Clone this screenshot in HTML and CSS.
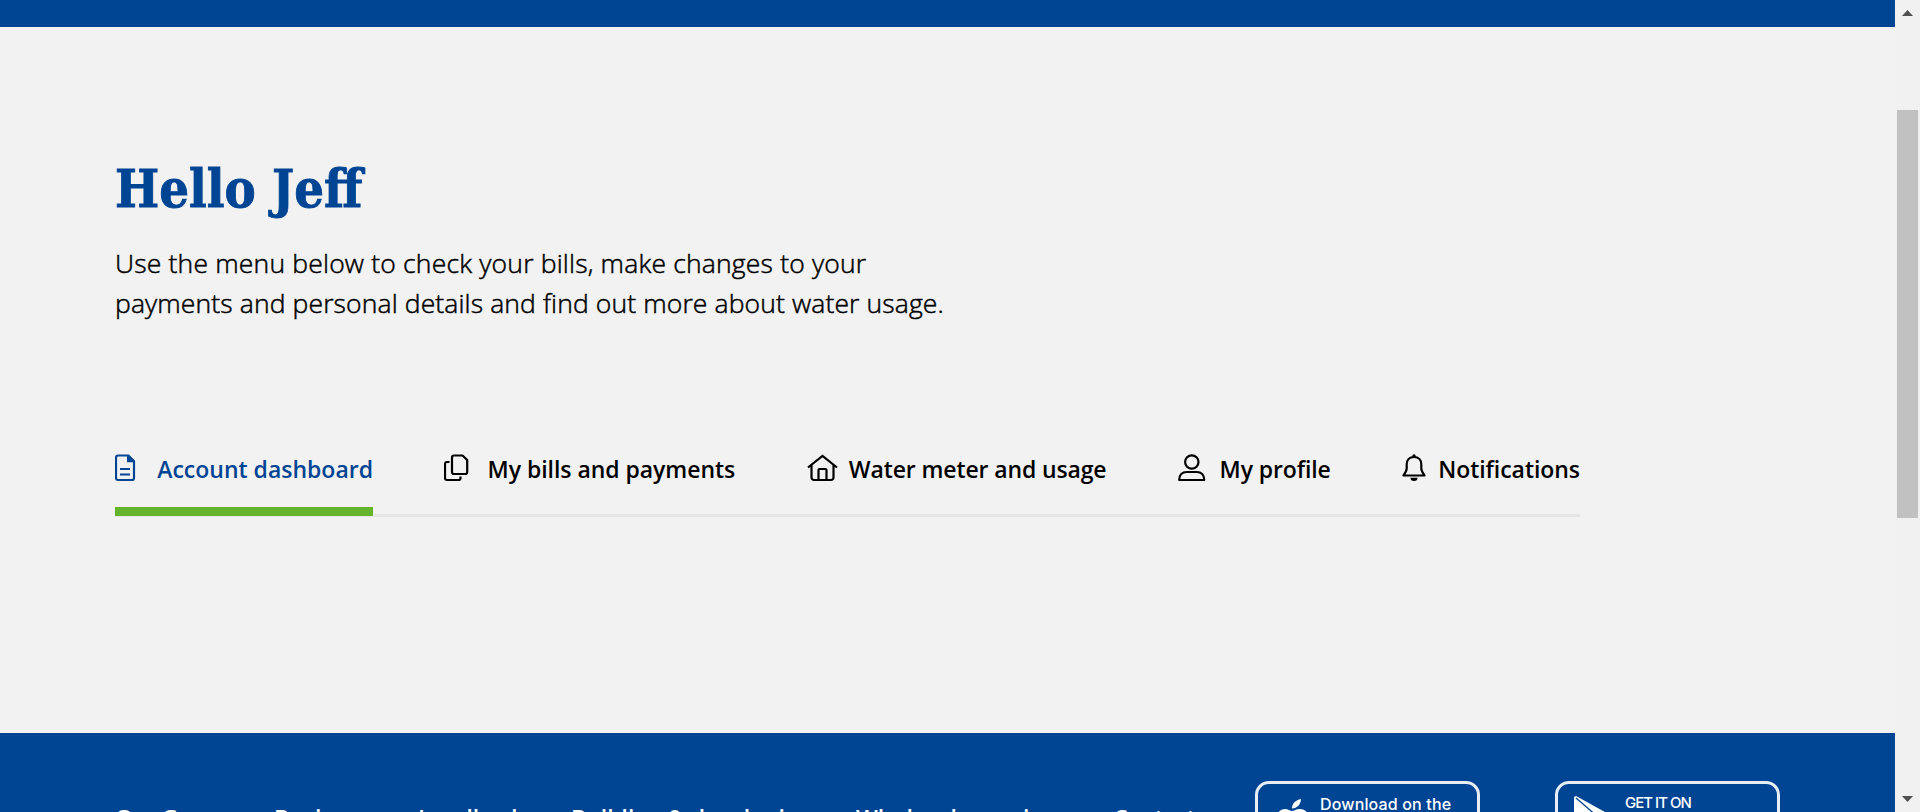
FILE: index.html
```html
<!DOCTYPE html>
<html lang="en">
<head>
<meta charset="utf-8">
<title>Account dashboard</title>
<link rel="stylesheet" href="styles.css">
</head>
<body>
<div class="page">
  <div class="topbar"></div>
  <main class="main">
    <h1 class="title">Hello Jeff</h1>
    <p class="intro"><span class="line-one">Use the menu below to check your bills, make changes to your</span><br><span class="line-two">payments and personal details and find out more about water usage.</span></p>
    <nav class="tabs">
      <a class="tab tab-active tab-dashboard"><svg class="icon" width="22" height="28" viewBox="0 0 22 28"><path d="M3 1.500h10.500L19 7.300v16.700a2 2 0 0 1-2 2H3a2 2 0 0 1-2-2V3.500a2 2 0 0 1 2-2z" fill="none" stroke="currentColor" stroke-width="2.200"/><path d="M12 1.500v6.700h7.500z" fill="currentColor"/><path d="M5 15h10M5 20.500h10" stroke="currentColor" stroke-width="2.200"/></svg><span class="tab-text">Account dashboard</span></a>
      <a class="tab tab-bills"><svg class="icon" width="26" height="28" viewBox="0 0 26 28"><path d="M10 1.500h8.500L23.200 6v12a2 2 0 0 1-2 2H10a2 2 0 0 1-2-2V3.500a2 2 0 0 1 2-2zM5.500 8H3a2 2 0 0 0-2 2v14a2 2 0 0 0 2 2h11.500a2 2 0 0 0 2-2v-1.500" fill="none" stroke="currentColor" stroke-width="2.200"/></svg><span class="tab-text">My bills and payments</span></a>
      <a class="tab tab-usage"><svg class="icon" width="32" height="28" viewBox="0 0 32 28"><path d="M1 13.500 15.500 1.800 30 13.500M4.500 11v12.500a2.500 2.500 0 0 0 2.500 2.500h17a2.500 2.500 0 0 0 2.500-2.500V11M11.500 26V16a1 1 0 0 1 1-1h6a1 1 0 0 1 1 1v10" fill="none" stroke="currentColor" stroke-width="2.200"/></svg><span class="tab-text">Water meter and usage</span></a>
      <a class="tab tab-profile"><svg class="icon" width="28" height="28" viewBox="0 0 28 28"><circle cx="13.800" cy="8" r="6.700" fill="none" stroke="currentColor" stroke-width="2.200"/><path d="M1.200 26c0-5 3-8 7.500-8h10c4.500 0 7.500 3 7.500 8z" fill="none" stroke="currentColor" stroke-width="2.200" stroke-linejoin="round"/></svg><span class="tab-text">My profile</span></a>
      <a class="tab tab-alerts"><svg class="icon" width="24" height="28" viewBox="0 0 24 28"><path d="M12 3C7.500 3 4.700 6 4.700 10.500v4c0 2.500-1.500 4.500-3.200 7h21c-1.700-2.500-3.200-4.500-3.200-7v-4C19.300 6 16.500 3 12 3z" fill="none" stroke="currentColor" stroke-width="2.200" stroke-linejoin="round"/><circle cx="12" cy="2" r="1.700" fill="currentColor"/><path d="M8.500 23.700h7a3.500 3.300 0 0 1-7 0z" fill="currentColor"/></svg><span class="tab-text">Notifications</span></a>
    </nav>
  </main>
  <footer class="footer">
    <div class="links">
      <a class="link-narrow">Our Group</a><a>Business</a><a>Landlords</a><a>Building &amp; developing</a><a>Wholesale services</a><a class="link-narrow">Contact</a>
    </div>
    <div class="badge">
      <svg class="badge-icon" width="36" height="44" viewBox="0 0 36 44"><path d="M18 12.500c0-5 3.500-8.500 9-9.500 0 5-4 9.500-9 9.500zM18 15c2 0 4-2 8-2 3 0 6 1.500 7.500 4-7 4-6 14 1 17-2 5-5 9-8 9-3 0-4-2-8-2s-5 2-8 2C5 43 1 34 1 26c0-8 5-13 10-13 3 0 5 2 7 2z" fill="#fff"/></svg>
      <span class="badge-text">Download on the</span>
    </div>
    <div class="badge badge-play">
      <svg class="badge-icon" width="40" height="44" viewBox="0 0 40 44"><path d="M0 1 2 0 40 21 0 43z" fill="#fff"/><path d="M2 2 24 21" stroke="#004494" stroke-width="1.300"/></svg>
      <span class="badge-text badge-text-play">GET IT ON</span>
    </div>
  </footer>
</div>
<div class="scrollbar">
  <svg class="arrow" width="11" height="6" viewBox="0 0 11 6"><path d="M0 6 5.500 0 11 6z" fill="#505050"/></svg>
  <div class="thumb"></div>
  <svg class="arrow arrow-down" width="11" height="6" viewBox="0 0 11 6"><path d="M0 0h11L5.500 6z" fill="#505050"/></svg>
</div>
</body>
</html>
```
FILE: styles.css
```css
* { box-sizing: border-box; }
body {
  margin: 0;
  display: flex;
  height: 812px;
  overflow: hidden;
  background: #f2f2f2;
  color: #000;
  font-family: "Open Sans", sans-serif;
}
.page { width: 1895px; height: 812px; overflow: hidden; display: flex; flex-direction: column; }
.topbar { height: 27px; flex: none; background: #004494; }
.main { height: 706px; flex: none; padding: 127px 0 0 115px; }
.title {
  margin: 0;
  height: 70px;
  color: #004494;
  font: bold 52px/70px "DejaVu Serif", serif;
  font-stretch: condensed;
  letter-spacing: 0;
  white-space: nowrap;
  -webkit-text-stroke: .8px #004494;
}
.intro { margin: 19px 0 0; height: 81px; font-size: 26.500px; font-weight: 300; line-height: 40px; white-space: nowrap; -webkit-text-stroke: .5px #000; }
.line-one { letter-spacing: .18px; }
.line-two { letter-spacing: .12px; }
.tabs {
  width: 1465px;
  height: 67px;
  margin-top: 126px;
  display: flex;
  justify-content: space-between;
  border-bottom: 3px solid #e6e6e6;
}
.tab { display: flex; justify-content: space-between; height: 66px; white-space: nowrap; font-size: 23px; font-weight: 600; line-height: 38px; }
.tab-active { color: #004494; border-bottom: 9px solid #66b32e; }
.tab-dashboard { width: 258px; }
.tab-bills { width: 291px; letter-spacing: -.04px; }
.tab-usage { width: 300px; letter-spacing: -.12px; }
.tab-profile { width: 153px; letter-spacing: -.1px; }
.tab-alerts { width: 178px; letter-spacing: -.05px; }
.icon { flex: none; margin-top: 4px; }
.footer { height: 79px; flex: none; display: flex; padding-left: 115px; background: #004494; color: #fff; }
.links {
  display: grid;
  grid-template-columns: 159px 144px 153px 285px 257px 1fr;
  width: 1140px;
  padding-top: 70px;
  font-size: 23px;
  font-weight: 600;
  line-height: 30px;
  white-space: nowrap;
}
.link-narrow { letter-spacing: -.6px; }
.badge { display: flex; width: 225px; height: 76px; margin-top: 48px; border: 3px solid #e8eef6; border-radius: 14px; }
.badge-play { margin-left: 75px; }
.badge-icon { flex: none; margin: 12px 0 0 16px; }
.badge-text { font: 500 16px/20px Inter, sans-serif; letter-spacing: .15px; margin: 10px 0 0 10px; white-space: nowrap; height: 20px; }
.badge-text-play { font-size: 15px; letter-spacing: -1px; margin-top: 9px; margin-left: 11px; }
.scrollbar { width: 25px; height: 812px; background: #f1f1f1; display: flex; flex-direction: column; align-items: center; padding: 10px 0; }
.thumb { width: 21px; height: 408px; margin-top: 94px; background: #c1c1c1; }
.arrow-down { margin-top: auto; }
```
